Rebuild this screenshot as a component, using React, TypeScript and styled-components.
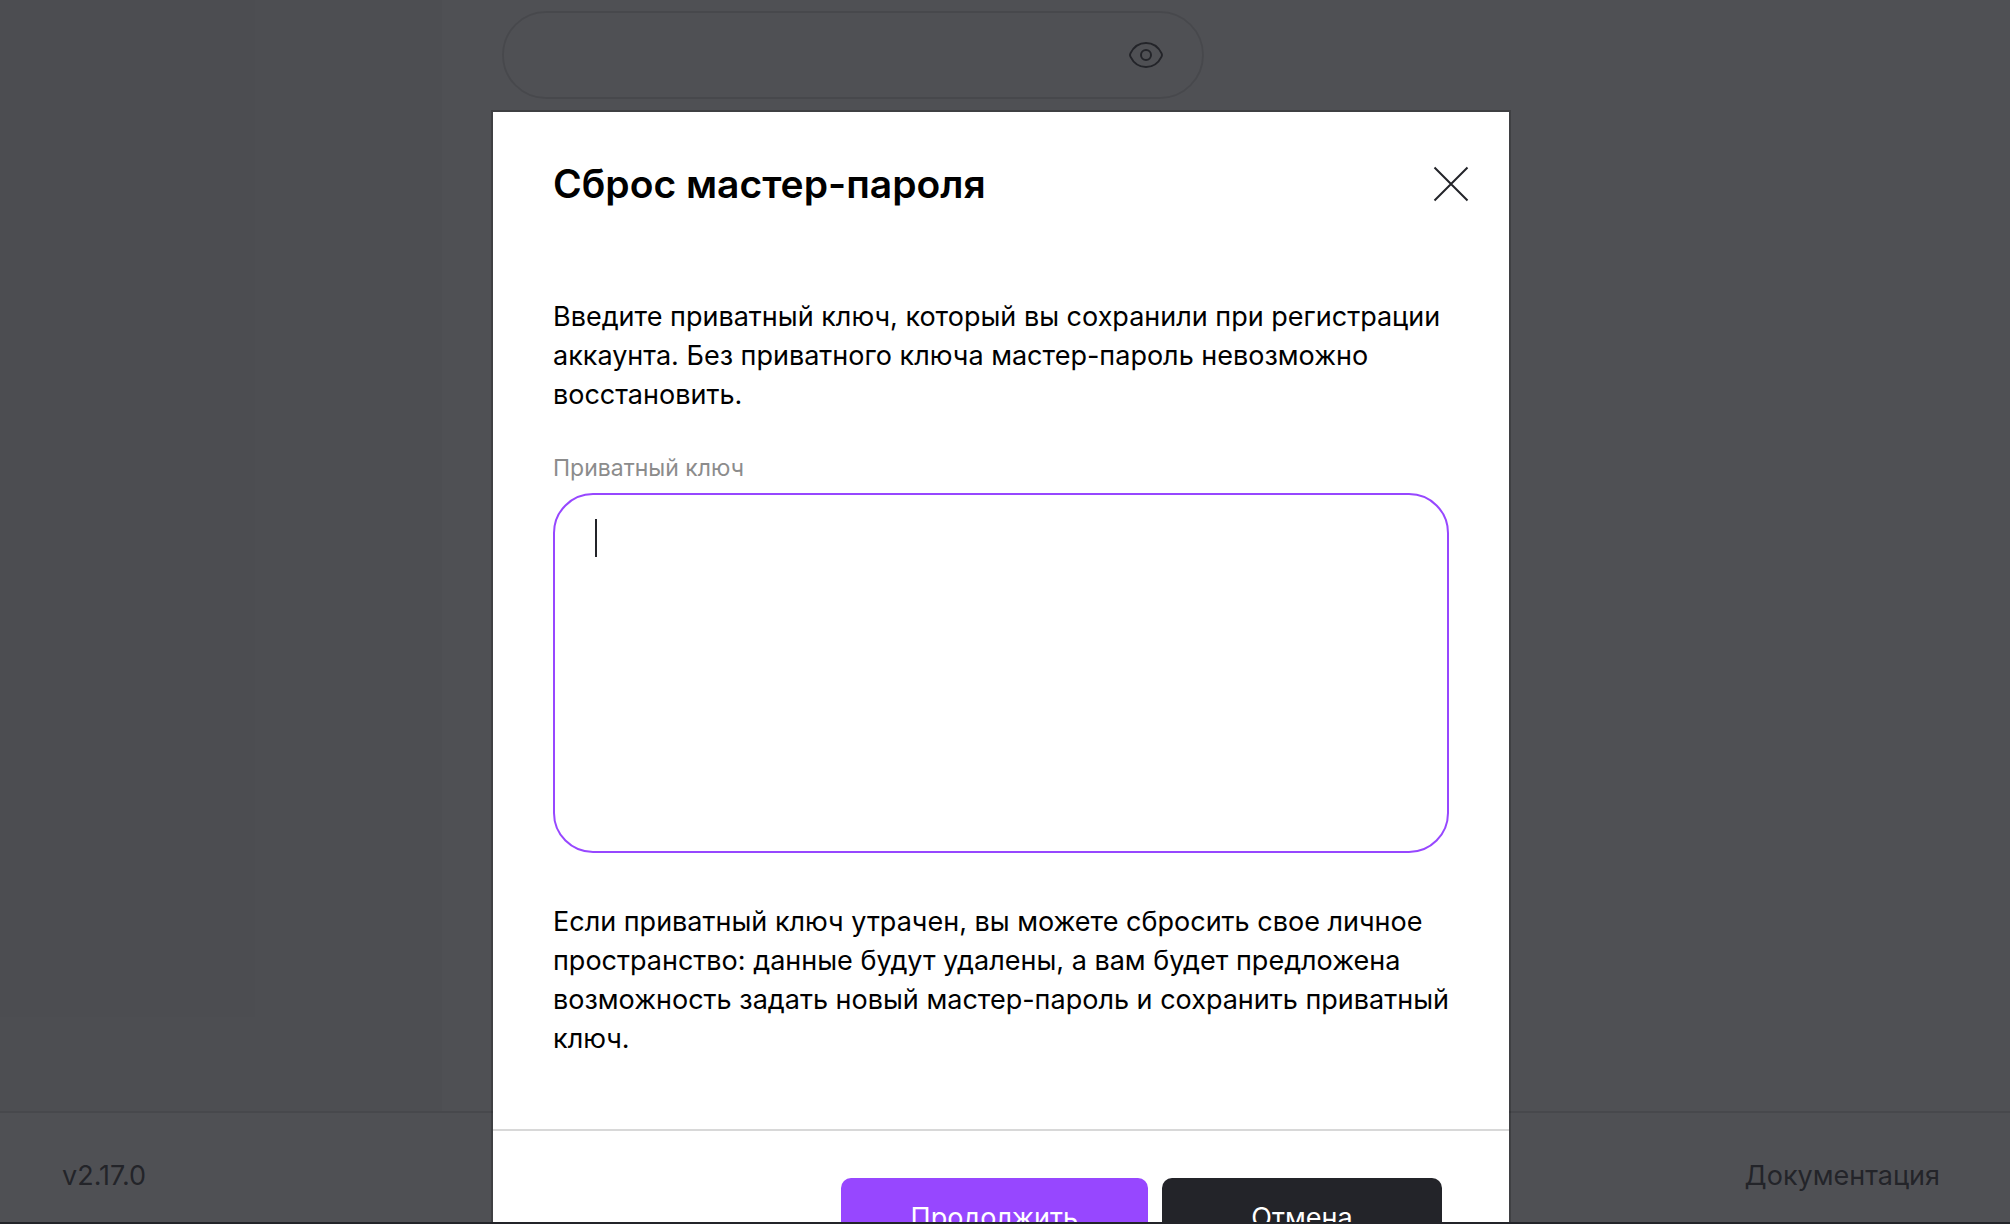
import React from 'react';
import styled, { createGlobalStyle } from 'styled-components';

const color = {
  ink: '#232429',
  accent: '#9747ff',
  line: '#d8d8d8',
  muted: '#8c8c8c',
  side: '#f2f2f2',
};

const GlobalStyle = createGlobalStyle`
  *, *::before, *::after { box-sizing: border-box; }
  body {
    margin: 0;
    background: #fff;
    font-family: Inter, "Noto Sans", sans-serif;
    font-size: 27px;
    line-height: 39px;
    color: #000;
  }
  button, input, textarea { font: inherit; color: inherit; }
`;

const Shell = styled.div`
  position: relative;
  display: flex;
  flex-direction: column;
  height: 100vh;
  overflow: hidden;
  border-bottom: 2px solid ${color.ink};
`;

const Page = styled.div`
  flex: 1;
  display: grid;
  grid-template-columns: 442px 1fr;
  min-height: 0;
`;

const Sidebar = styled.aside`
  background: ${color.side};
`;

const Content = styled.main`
  padding: 11px 60px;
`;

const PasswordField = styled.div`
  display: flex;
  align-items: center;
  width: 100%;
  max-width: 702px;
  height: 88px;
  padding: 0 38px;
  border: 2px solid ${color.line};
  border-radius: 44px;
`;

const PasswordInput = styled.input`
  flex: 1;
  min-width: 0;
  border: 0;
  outline: 0;
  background: transparent;
`;

const IconButton = styled.button`
  display: flex;
  flex: none;
  padding: 0;
  border: 0;
  background: transparent;
  color: ${color.ink};
  cursor: pointer;
`;

const Footer = styled.footer`
  display: flex;
  justify-content: space-between;
  padding: 43px 70px 27px 62px;
  border-top: 2px solid ${color.line};
  color: ${color.ink};
`;

const FooterLink = styled.a`
  color: inherit;
  text-decoration: none;
`;

const Overlay = styled.div`
  position: absolute;
  inset: 0;
  display: flex;
  justify-content: center;
  align-items: flex-start;
  padding: 110px 8px 0 0;
  overflow: hidden;
  background: rgba(35, 36, 41, 0.8);
`;

const Modal = styled.section`
  width: 100%;
  max-width: 1020px;
  border: 2px solid rgba(0, 0, 0, 0.2);
  background: #fff;
  background-clip: padding-box;
`;

const ModalHeader = styled.header`
  display: flex;
  justify-content: space-between;
  align-items: center;
  padding: 48px 40px 48px 60px;
`;

const Title = styled.h2`
  margin: 0;
  font-size: 39px;
  line-height: 48px;
  font-weight: 600;
`;

const ModalBody = styled.div`
  display: flex;
  flex-direction: column;
  padding: 41px 48px 71px 60px;
`;

const Text = styled.p`
  margin: 0;
`;

const Field = styled.div`
  display: flex;
  flex-direction: column;
  gap: 8px;
  margin: 37px 12px 49px 0;
`;

const Label = styled.label`
  font-size: 23px;
  line-height: 34px;
  color: ${color.muted};
`;

const KeyBox = styled.div`
  position: relative;
  display: flex;
`;

const KeyInput = styled.textarea`
  width: 100%;
  height: 360px;
  padding: 24px 40px;
  border: 2px solid ${color.accent};
  border-radius: 40px;
  outline: 0;
  resize: none;
  background: #fff;
  caret-color: transparent;
`;

const Caret = styled.span`
  position: absolute;
  top: 26px;
  left: 42px;
  width: 2px;
  height: 38px;
  background: ${color.ink};
`;

const Actions = styled.div`
  display: flex;
  justify-content: flex-end;
  gap: 14px;
  padding: 47px 67px 48px;
  border-top: 2px solid ${color.line};
`;

const Button = styled.button<{ $primary?: boolean }>`
  min-width: 280px;
  height: 78px;
  padding: 0 70px;
  border: 0;
  border-radius: 10px;
  background: ${(p) => (p.$primary ? color.accent : color.ink)};
  color: #fff;
  cursor: pointer;
`;

const EyeIcon = () => (
  <svg width="36" height="28" viewBox="0 0 36 28" fill="none" stroke="currentColor" strokeWidth="2" strokeLinejoin="round" aria-hidden="true">
    <path d="M2.400 12.400C5.500 6.200 10.800 2 18 2s12.500 4.200 15.600 10.400c.6 1.200.6 2 0 3.200C30.500 21.800 25.200 26 18 26S5.500 21.800 2.400 15.600c-.6-1.200-.6-2 0-3.200z" />
    <circle cx="18" cy="14" r="5" />
  </svg>
);

const CloseIcon = () => (
  <svg width="36" height="36" viewBox="0 0 36 36" fill="none" stroke="currentColor" strokeWidth="2" aria-hidden="true">
    <path d="M1.500 1.500 34.500 34.500M34.500 1.500 1.500 34.500" />
  </svg>
);

export default function App() {
  return (
    <Shell>
      <GlobalStyle />
      <Page>
        <Sidebar />
        <Content>
          <PasswordField>
            <PasswordInput type="password" aria-label="Мастер-пароль" />
            <IconButton type="button" aria-label="Показать пароль">
              <EyeIcon />
            </IconButton>
          </PasswordField>
        </Content>
      </Page>
      <Footer>
        <span>v2.17.0</span>
        <FooterLink href="#docs">Документация</FooterLink>
      </Footer>
      <Overlay>
        <Modal role="dialog" aria-modal="true" aria-labelledby="reset-title">
          <ModalHeader>
            <Title id="reset-title">Сброс мастер-пароля</Title>
            <IconButton type="button" aria-label="Закрыть">
              <CloseIcon />
            </IconButton>
          </ModalHeader>
          <ModalBody>
            <Text>
              Введите приватный ключ, который вы сохранили при регистрации аккаунта. Без приватного
              ключа мастер-пароль невозможно восстановить.
            </Text>
            <Field>
              <Label htmlFor="private-key">Приватный ключ</Label>
              <KeyBox>
                <KeyInput id="private-key" />
                <Caret />
              </KeyBox>
            </Field>
            <Text>
              Если приватный ключ утрачен, вы можете сбросить свое личное пространство: данные будут
              удалены, а вам будет предложена возможность задать новый мастер-пароль и сохранить
              приватный ключ.
            </Text>
          </ModalBody>
          <Actions>
            <Button type="button" $primary>
              Продолжить
            </Button>
            <Button type="button">Отмена</Button>
          </Actions>
        </Modal>
      </Overlay>
    </Shell>
  );
}
